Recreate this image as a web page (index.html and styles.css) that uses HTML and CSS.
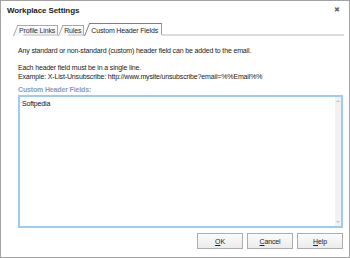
FILE: index.html
```html
<!DOCTYPE html>
<html lang="en">
<head>
    <meta charset="UTF-8">
    <title>Workplace Settings</title>
    <link rel="stylesheet" href="styles.css">
</head>
<body>
  <div class="window">
     <div class="titlebar">
        <span class="title">Workplace Settings</span>
        <span class="close">&#x2716;</span>
     </div>
     <div class="tabstrip">
        <div class="tab">Profile Links</div>
        <div class="tab">Rules</div>
        <div class="tab active">Custom Header Fields</div>
        <div class="tab-fill"></div>
     </div>
     <div class="content">
        <p class="intro">Any standard or non-standard (custom) header field can be added to the email.</p>
        <p class="note">Each header field must be in a single line.<br>Example: X-List-Unsubscribe: http://www.mysite/unsubscribe?email=%%Email%%</p>
        <p class="label">Custom Header Fields:</p>
        <div class="field">
           <div class="field-text">Softpedia</div>
           <div class="scroll">
              <span class="arrow up"></span>
              <span class="arrow down"></span>
           </div>
        </div>
        <div class="buttons">
           <button class="btn"><u>O</u>K</button>
           <button class="btn"><u>C</u>ancel</button>
           <button class="btn"><u>H</u>elp</button>
        </div>
     </div>
  </div>
</body>
</html>
```

FILE: styles.css
```css
* {
  margin: 0;
  padding: 0;
  box-sizing: border-box;
}

body {
  font-family: "Liberation Sans", Arial, sans-serif;
  font-size: 7px;
  letter-spacing: -0.15px;
  color: #1a1a1a;
  background: #fff;
}

.window {
  width: 350px;
  height: 258px;
  border: 1px solid #a3a3a3;
  background: #fff;
  display: flex;
  flex-direction: column;
}

.titlebar {
  height: 18px;
  display: flex;
  justify-content: space-between;
  align-items: center;
  padding: 0 9px 0 6px;
}

.title {
  font-weight: bold;
  font-size: 8px;
  letter-spacing: -0.1px;
  color: #222;
}

.close {
  font-size: 7px;
  color: #6a6a6a;
}

/* tabs */
.tabstrip {
  margin-top: 3px;
  height: 14px;
  display: flex;
  align-items: flex-end;
  padding-left: 12px;
  margin-right: 5px;
}

.tab {
  position: relative;
  z-index: 0;
  height: 11px;
  line-height: 10px;
  margin-left: 5px;
  padding: 0 2px 0 1px;
  border-top: 1px solid #a8a8a8;
  border-right: 1px solid #a8a8a8;
  border-bottom: 2px solid #dcdcdc;
  background: linear-gradient(#ffffff, #efefef);
  color: #333;
  white-space: nowrap;
}

.tab::before {
  content: "";
  position: absolute;
  z-index: -1;
  top: -1px;
  bottom: -2px;
  left: -5px;
  width: 9px;
  border-left: 1px solid #a8a8a8;
  border-top: 1px solid #a8a8a8;
  background: #fafafa;
  transform: skewX(-22deg);
  transform-origin: bottom left;
}

.tab.active {
  z-index: 1;
  height: 13px;
  line-height: 13px;
  padding: 0 3px 0 2px;
  border-top: 1px solid #7e7e7e;
  border-right: 1px solid #9a9a9a;
  border-bottom: 2px solid #fff;
  background: #fff;
  color: #222;
}

.tab.active::before {
  background: #fff;
  border-color: #7e7e7e;
}

.tab-fill {
  flex: 1;
  border-bottom: 2px solid #dcdcdc;
}

/* content */
.content {
  flex: 1;
  display: flex;
  flex-direction: column;
  padding: 0 6px 0 17px;
}

.intro {
  margin-top: 10px;
  line-height: 9px;
}

.note {
  margin-top: 8px;
  line-height: 9px;
}

.label {
  margin-top: 4px;
  line-height: 9px;
  color: #8a9cb4;
  font-weight: bold;
}

.field {
  margin-top: 1px;
  height: 133px;
  border: 2px solid #9dcbf2;
  display: flex;
  background: #fff;
}

.field-text {
  flex: 1;
  padding: 2px 2px;
  line-height: 9px;
  color: #111;
}

.scroll {
  width: 6px;
  background: #f2f2f2;
  display: flex;
  flex-direction: column;
  justify-content: space-between;
  align-items: center;
  padding: 3px 0;
}

.arrow {
  width: 0;
  height: 0;
  border-left: 2px solid transparent;
  border-right: 2px solid transparent;
}

.arrow.up {
  border-bottom: 2px solid #c4c4c4;
}

.arrow.down {
  border-top: 2px solid #c4c4c4;
}

.buttons {
  margin-top: 5px;
  display: flex;
  justify-content: flex-end;
  gap: 4px;
}

.btn {
  width: 46px;
  height: 16px;
  border: 1px solid #adadad;
  background: linear-gradient(#fbfbfb, #ececec);
  font-family: "Liberation Sans", Arial, sans-serif;
  font-size: 7px;
  letter-spacing: -0.15px;
  color: #222;
}
```
